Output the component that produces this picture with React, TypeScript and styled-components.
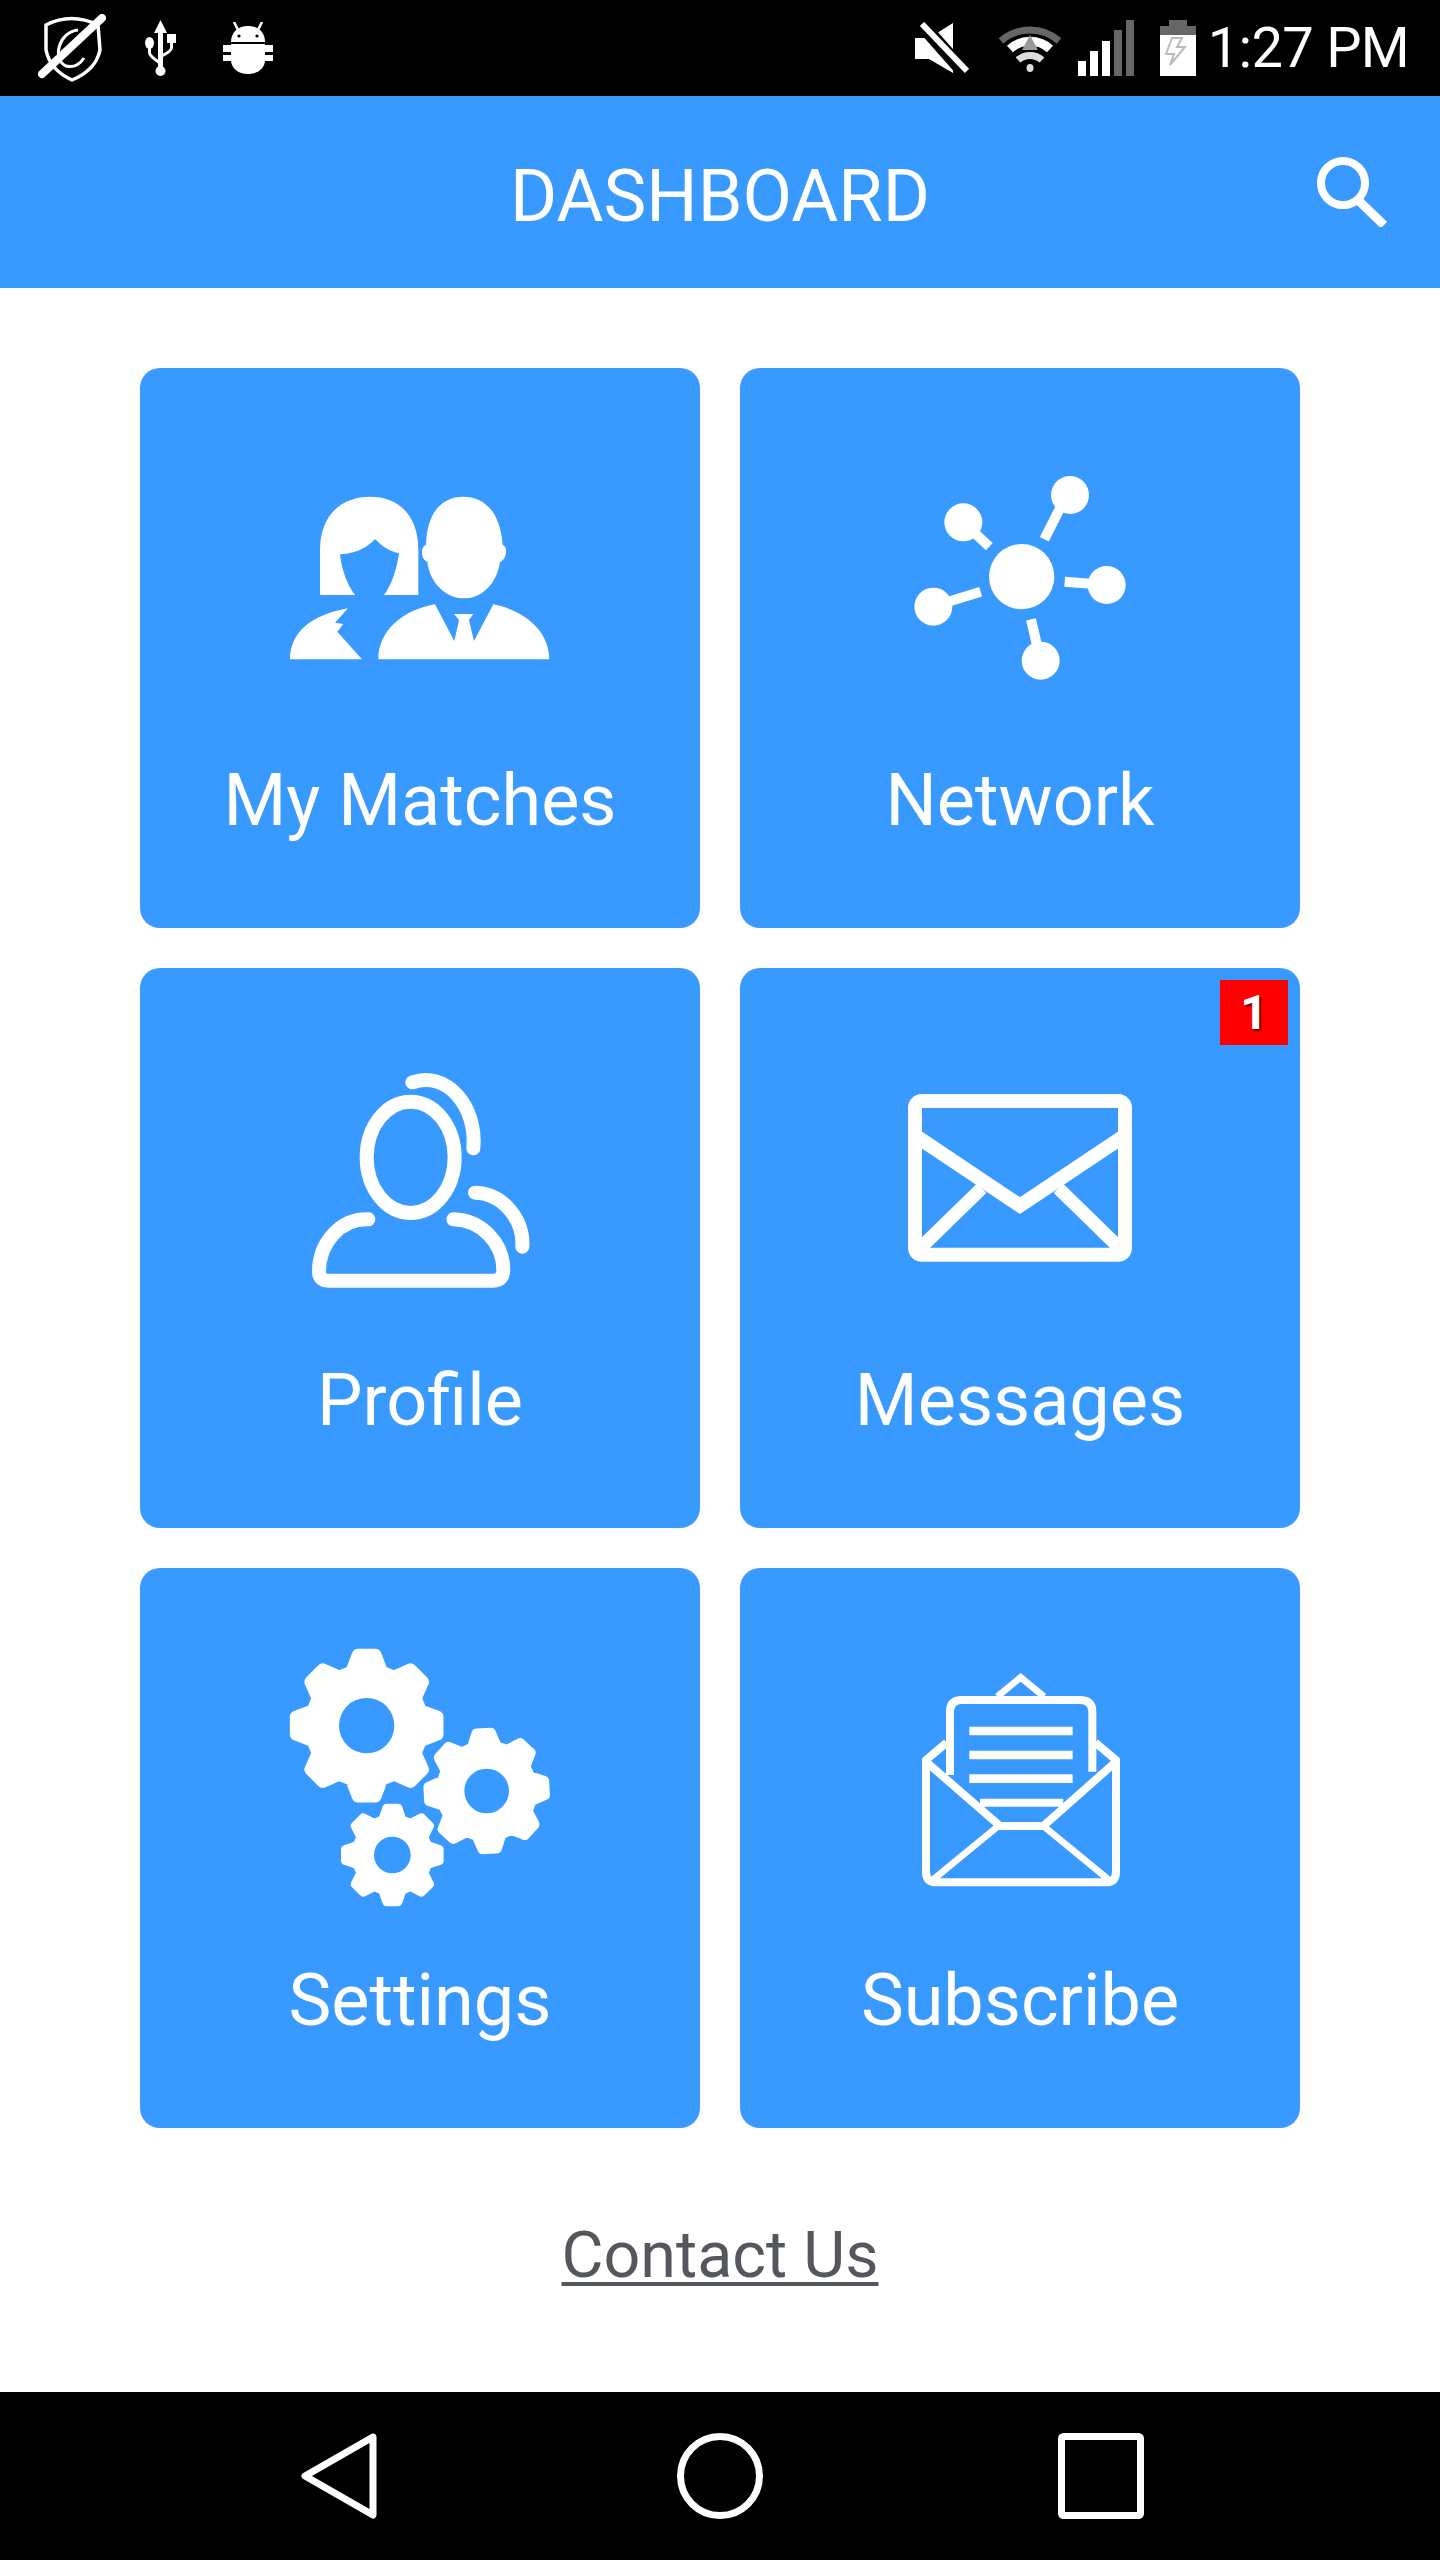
import React from "react";
import styled, { createGlobalStyle } from "styled-components";

const BLUE = "#3899ff";

const Global = createGlobalStyle`
  html, body { margin: 0; padding: 0; background: #fff; }
  * { box-sizing: border-box; }
`;

const Page = styled.div`
  width: 1440px;
  height: 2560px;
  display: flex;
  flex-direction: column;
  background: #fff;
  font-family: Roboto, "Liberation Sans", sans-serif;
  color: #fff;
  overflow: hidden;
`;

const StatusBar = styled.div`
  height: 96px;
  flex: none;
  background: #000;
  display: flex;
  align-items: center;
  justify-content: space-between;
  padding: 0 31px 0 38px;
`;

const StatusGroup = styled.div`
  display: flex;
  align-items: center;
`;

const StatusIcon = styled.svg<{ $gap?: number }>`
  display: block;
  flex: none;
  margin-left: ${(p) => p.$gap ?? 0}px;
`;

const Clock = styled.span`
  margin-left: 12px;
  font-size: 56px;
  line-height: 66px;
  font-weight: 400;
  letter-spacing: -0.7px;
  white-space: nowrap;
`;

const Header = styled.header`
  height: 192px;
  flex: none;
  background: ${BLUE};
  display: grid;
  grid-template-columns: 1fr auto 1fr;
  align-items: center;
  padding-right: 53px;
`;

const Title = styled.h1`
  grid-column: 2;
  margin: 10px 0 0 53px;
  font-size: 72px;
  font-weight: 400;
  line-height: 80px;
  white-space: nowrap;
`;

const SearchIcon = styled.svg`
  grid-column: 3;
  justify-self: end;
  display: block;
`;

const Main = styled.main`
  flex: 1;
  display: flex;
  flex-direction: column;
  align-items: center;
  padding-top: 80px;
`;

const Grid = styled.div`
  display: grid;
  grid-template-columns: repeat(2, 560px);
  grid-auto-rows: 560px;
  gap: 40px;
`;

const Card = styled.a`
  position: relative;
  display: flex;
  flex-direction: column;
  align-items: center;
  background: ${BLUE};
  border-radius: 20px;
`;

const IconSlot = styled.div`
  height: 380px;
  width: 100%;
  display: flex;
  justify-content: center;
  align-items: flex-start;
`;

const CardIcon = styled.svg<{ $top: number }>`
  display: block;
  margin-top: ${(p) => p.$top}px;
`;

const Label = styled.span`
  font-size: 72px;
  line-height: 106px;
  white-space: nowrap;
`;

const Badge = styled.span`
  position: absolute;
  top: 12px;
  right: 12px;
  width: 68px;
  height: 65px;
  background: #f00;
  display: flex;
  align-items: center;
  justify-content: center;
  font-size: 48px;
  font-weight: 700;
  text-shadow: 2px 2px 2px rgba(0, 0, 0, 0.55);
`;

const Contact = styled.a`
  margin-top: 89px;
  font-size: 64.6px;
  line-height: 76px;
  color: #54585c;
  text-decoration: underline;
  text-decoration-thickness: 4px;
  text-underline-offset: 5px;
`;

const NavBar = styled.nav`
  height: 168px;
  flex: none;
  background: #000;
  display: flex;
  align-items: center;
  justify-content: center;
  gap: 295px;
`;

const NavIcon = styled.svg`
  display: block;
  overflow: visible;
`;

function gearPoints(cx: number, cy: number, tip: number, root: number, teeth: number, rot: number, tipA: number, rootA: number) {
  const pts: string[] = [];
  for (let k = 0; k < teeth; k++) {
    const c = ((k * 360) / teeth + rot - 90) * (Math.PI / 180);
    const add = (r: number, a: number) => pts.push(`${(cx + r * Math.cos(a)).toFixed(1)},${(cy + r * Math.sin(a)).toFixed(1)}`);
    add(root, c - rootA);
    add(tip, c - tipA);
    add(tip, c + tipA);
    add(root, c + rootA);
  }
  return pts.join(" ");
}

const Gear = ({ cx, cy, tip, root, hole, rot }: { cx: number; cy: number; tip: number; root: number; hole: number; rot: number }) => {
  const sw = tip * 0.17;
  return (
    <g>
      <polygon points={gearPoints(cx, cy, tip - sw / 2, root - sw / 3, 8, rot, 0.12, 0.27)} fill="#fff" stroke="#fff" strokeWidth={sw} strokeLinejoin="round" />
      <circle cx={cx} cy={cy} r={hole} fill={BLUE} />
    </g>
  );
};

const MatchesIcon = () => (
  <CardIcon $top={92} width={320} height={220} viewBox="0 0 960 660" fill="#fff">
    <path d="M180 405 L180 270 C180 170 240 110 330 110 C420 110 475 170 475 270 L475 405 L372 405 C395 375 410 330 417 280 C385 272 365 258 345 237 C325 258 295 280 240 283 C245 330 262 375 285 405 Z" />
    <path d="M90 598 C90 520 150 465 264 445 L225 488 L250 492 L232 515 L306 598 Z" />
    <path d="M610 110 C680 110 722 165 728 255 C738 258 742 275 735 290 C730 300 725 305 720 305 C712 365 670 415 612 415 C555 415 508 365 502 305 C490 302 483 285 487 268 C490 258 495 255 498 255 C500 165 540 110 610 110 Z" />
    <path d="M355 598 C355 510 430 450 525 433 L583 543 L597 480 L582 462 L640 462 L627 480 L642 543 L700 433 C790 450 868 510 868 598 Z" />
  </CardIcon>
);

const NetworkIcon = () => (
  <CardIcon $top={82} width={280} height={240} viewBox="0 0 840 720" fill="#fff" stroke="none">
    <circle cx={425} cy={380} r={98} />
    <circle cx={570} cy={135} r={57} />
    <circle cx={250} cy={217} r={57} />
    <circle cx={680} cy={405} r={57} />
    <circle cx={160} cy={470} r={57} />
    <circle cx={482} cy={632} r={57} />
    <g stroke="#fff" strokeWidth={30}>
      <line x1={540} y1={175} x2={493} y2={268} />
      <line x1={285} y1={250} x2={328} y2={290} />
      <line x1={554} y1={395} x2={640} y2={402} />
      <line x1={302} y1={425} x2={200} y2={457} />
      <line x1={453} y1={508} x2={472} y2={590} />
    </g>
  </CardIcon>
);

const ProfileIcon = () => (
  <CardIcon $top={82} width={260} height={260} viewBox="0 0 780 780" fill="none" stroke="#fff" strokeWidth={42} strokeLinecap="round">
    <ellipse cx={362} cy={322} rx={132} ry={167} />
    <path d="M367 97 C470 60 562 170 550 295" />
    <path d="M555 428 C640 430 702 510 697 590" />
    <path d="M235 508 C150 505 87 580 87 665 C87 680 95 692 115 692 L610 692 C630 692 640 680 640 660 C640 580 575 510 490 508" />
  </CardIcon>
);

const MessagesIcon = () => (
  <CardIcon $top={119} width={240} height={183} viewBox="60 381 720 549" fill="none" stroke="#fff" strokeWidth={42}>
    <rect x={105} y={423} width={630} height={461} rx={20} />
    <path d="M115 533 L420 737 L725 533" />
    <path d="M305 685 L125 860" strokeWidth={40} />
    <path d="M535 685 L715 860" strokeWidth={40} />
  </CardIcon>
);

const SettingsIcon = () => (
  <CardIcon $top={62} width={300} height={290} viewBox="0 0 900 870">
    <Gear cx={290} cy={287} tip={232} root={180} hole={83} rot={0} />
    <Gear cx={650} cy={483} tip={190} root={147} hole={67} rot={-3} />
    <Gear cx={367} cy={675} tip={155} root={118} hole={55} rot={0} />
  </CardIcon>
);

const SubscribeIcon = () => (
  <CardIcon $top={82} width={260} height={260} viewBox="-30 0 780 780" fill="none" stroke="#fff" strokeWidth={24}>
    <path d="M292 140 L362 82 L432 140" strokeWidth={20} />
    <path d="M150 375 L150 185 Q150 150 185 150 L540 150 Q577 150 577 185 L577 365" />
    <path d="M208 243 H518 M208 315 H518 M208 386 H518" strokeWidth={26} />
    <path d="M140 278 L78 330 L78 665 Q78 697 110 697 L618 697 Q648 697 648 665 L648 330 L586 278" />
    <path d="M78 335 L300 528 L430 528 L648 335" />
    <path d="M240 458 H490" />
    <path d="M100 688 L295 528 M625 688 L430 528" strokeWidth={20} />
  </CardIcon>
);

const tiles = [
  { label: "My Matches", icon: <MatchesIcon /> },
  { label: "Network", icon: <NetworkIcon /> },
  { label: "Profile", icon: <ProfileIcon /> },
  { label: "Messages", icon: <MessagesIcon />, badge: "1" },
  { label: "Settings", icon: <SettingsIcon /> },
  { label: "Subscribe", icon: <SubscribeIcon /> },
];

export default function App() {
  return (
    <Page>
      <Global />
      <StatusBar>
        <StatusGroup>
          <StatusIcon width={68} height={68} viewBox="38 14 68 68" fill="none" stroke="#fff">
            <path d="M46 25 Q71 12 98 25 L100 50 Q96 70 72 80 Q50 70 46 50 Z" strokeWidth={3.5} />
            <path d="M78 30 C58 32 52 60 66 66 C74 68 80 64 84 58" strokeWidth={3} />
            <line x1={42} y1={74} x2={102} y2={18} strokeWidth={8} strokeLinecap="round" />
          </StatusIcon>
          <StatusIcon $gap={39} width={31} height={56} viewBox="145 19 31 56" fill="#fff" stroke="none">
            <path d="M160.5 19 L167 32 L163 32 L163 68 L158 68 L158 32 L154 32 Z" />
            <circle cx={160.5} cy={70} r={5} />
            <ellipse cx={149.5} cy={42} rx={4.5} ry={6} />
            <rect x={167} y={33} width={9} height={9} />
            <path d="M149.5 46 L149.5 52 Q149.5 55 160 62" fill="none" stroke="#fff" strokeWidth={3} />
            <path d="M171.5 42 L171.5 47 Q171.5 50 160 56" fill="none" stroke="#fff" strokeWidth={3} />
          </StatusIcon>
          <StatusIcon $gap={47} width={50} height={52} viewBox="223 22 50 52" fill="#fff">
            <path d="M231 42 C231 33 237 26 248 26 C259 26 265 33 265 42 Z" />
            <path d="M234 22 L238 30 M262 22 L258 30" stroke="#fff" strokeWidth={2.5} />
            <circle cx={239} cy={36} r={1.6} fill="#000" />
            <circle cx={257} cy={36} r={1.6} fill="#000" />
            <path d="M231 44 H265 V60 C265 68 258 74 248 74 C238 74 231 68 231 60 Z" />
            <rect x={223} y={45} width={50} height={7} />
            <rect x={223} y={55} width={50} height={6} />
          </StatusIcon>
        </StatusGroup>
        <StatusGroup>
          <StatusIcon width={54} height={52} viewBox="917 21 54 52">
            <path d="M917 37 H931 L955 22 V72 L931 58 H917 Z" fill="#fff" />
            <line x1={919} y1={18} x2={972} y2={78} stroke="#000" strokeWidth={14} />
            <line x1={924} y1={23} x2={969} y2={70} stroke="#fff" strokeWidth={6} />
          </StatusIcon>
          <StatusIcon $gap={28} width={66} height={50} viewBox="999 21 66 50" fill="none">
            <path d="M1003 39 A44 44 0 0 1 1061 39" stroke="#666" strokeWidth={7} />
            <path d="M1012 47 A30 30 0 0 1 1052 47" stroke="#fff" strokeWidth={9} />
            <path d="M1032 33 L1024 48 H1040 Z" fill="#999" />
            <path d="M1020 58 A18 18 0 0 1 1044 58" stroke="#ddd" strokeWidth={7} />
            <ellipse cx={1032} cy={66} rx={3.5} ry={4} fill="#ddd" />
          </StatusIcon>
          <StatusIcon $gap={15} width={56} height={56} viewBox="1080 20 56 56">
            <rect x={1080} y={61} width={8} height={15} fill="#fff" />
            <rect x={1092} y={51} width={8} height={25} fill="#fff" />
            <rect x={1104} y={41} width={8} height={35} fill="#fff" />
            <rect x={1116} y={30} width={8} height={46} fill="#666" />
            <rect x={1128} y={20} width={8} height={56} fill="#666" />
          </StatusIcon>
          <StatusIcon $gap={26} width={36} height={56} viewBox="1162 20 36 56">
            <rect x={1171} y={20} width={18} height={7} fill="#666" />
            <rect x={1162} y={26} width={36} height={9} fill="#666" />
            <rect x={1162} y={35} width={36} height={41} fill="#fff" />
            <path d="M1174 38 L1168 54 H1176 L1172 65 L1187 47 H1179 L1184 38 Z" fill="none" stroke="#bbb" strokeWidth={2} />
          </StatusIcon>
          <Clock>1:27 PM</Clock>
        </StatusGroup>
      </StatusBar>
      <Header>
        <Title>DASHBOARD</Title>
        <SearchIcon width={70} height={70} viewBox="1317 157 70 70" fill="none" stroke="#fff">
          <circle cx={1343} cy={183} r={22} strokeWidth={8} />
          <line x1={1358} y1={200} x2={1384} y2={225} strokeWidth={9} />
        </SearchIcon>
      </Header>
      <Main>
        <Grid>
          {tiles.map((t) => (
            <Card key={t.label}>
              <IconSlot>{t.icon}</IconSlot>
              <Label>{t.label}</Label>
              {t.badge && <Badge>{t.badge}</Badge>}
            </Card>
          ))}
        </Grid>
        <Contact>Contact Us</Contact>
      </Main>
      <NavBar>
        <NavIcon width={86} height={86} viewBox="296 2433 86 86" fill="none" stroke="#fff" strokeWidth={7} strokeLinejoin="round">
          <path d="M373 2437 L305 2476 L373 2515 Z" />
        </NavIcon>
        <NavIcon width={86} height={86} viewBox="677 2433 86 86" fill="none" stroke="#fff" strokeWidth={7}>
          <circle cx={720} cy={2476} r={39.5} />
        </NavIcon>
        <NavIcon width={86} height={86} viewBox="1058 2433 86 86" fill="none" stroke="#fff" strokeWidth={7}>
          <rect x={1061.5} y={2436.5} width={79} height={79} rx={2} />
        </NavIcon>
      </NavBar>
    </Page>
  );
}
